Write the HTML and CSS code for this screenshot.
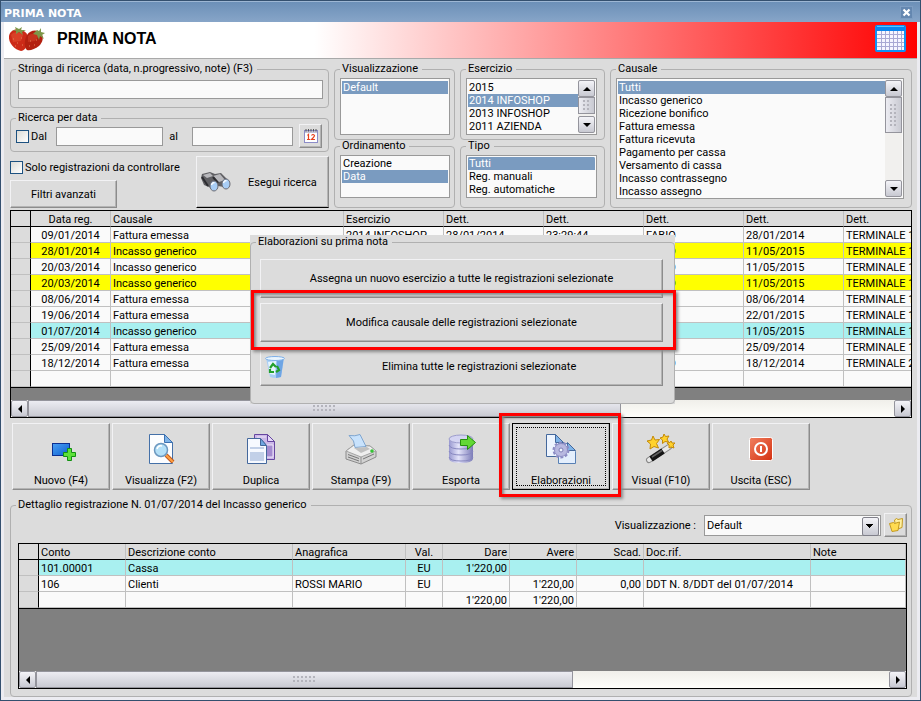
FILE: index.html
```html
<!DOCTYPE html>
<html lang="it">
<head>
    <meta charset="UTF-8">
    <meta name="viewport" content="width=device-width, initial-scale=1.0">
    <title>Prima nota</title>
    <link rel="stylesheet" href="styles.css">
</head>
<body>
    <div class="window">
        <div class="titlebar">
            <span>PRIMA NOTA</span>
            <button class="close" type="button" aria-label="Chiudi">
                <svg width="11" height="11" viewBox="0 0 11 11"><path d="M2.5 2.5l6 6M8.500 2.500l-6 6" stroke="#fff" stroke-width="2.200"/></svg>
            </button>
        </div>

        <header class="header">
            <svg width="38" height="26" viewBox="0 0 38 26">
                <path d="M1 10C2 4 8 2 14 4c5 2 7 7 6 12-1 5-4 9-7 9C7 24 0 17 1 10z" fill="#cc2a17"/>
                <path d="M3 9c3-4 8-3 12 0l-2 6-8 1z" fill="#d94026"/>
                <path d="M19 9c3-5 10-6 14-2 3 4 2 9-2 13-4 3-9 5-12 4-3-2-3-10 0-15z" fill="#b3200f"/>
                <path d="M20 10c3-3 8-3 11 0l-4 5-7 1z" fill="#c5321c"/>
                <path d="M4 5l4-1-1-3 4 2 3-2-1 3 5 0-4 2 1 3-4-3-3 2 0-3zM26 7l3-3 2 1 2-3 0 4 4 1-3 2 2 4-4-3-1 4-2-5-4-1z" fill="#7d9648"/>
                <path d="M5 13h1M9 17h1M13 12h1M7 20h1M14 19h1M22 15h1M26 19h1M28 14h1M21 20h1" stroke="#e08058"/>
            </svg>
            <h1>PRIMA NOTA</h1>
            <svg class="calendar-icon" width="32" height="28" viewBox="0 0 32 28">
                <rect x="1" y="1" width="29" height="25" rx="1" fill="#f6f6ff" stroke="#0f93f5" stroke-width="2"/>
                <path d="M1 1h29v5H1z" fill="#0a86ee"/>
                <path d="M2 1.500h27" stroke="#58c4ff"/>
                <path d="M6.500 6v19M10.500 6v19M14.500 6v19M18.500 6v19M22.500 6v19M26.500 6v19M2 9.500h27M2 13.500h27M2 17.500h27M2 21.500h27" stroke="#a9a9d4"/>
            </svg>
        </header>

        <main class="content">
            <form class="filters">
                <div class="search">
                    <fieldset class="group search-text">
                        <legend><label for="stringa">Stringa di ricerca (data, n.progressivo, note) (F3)</label></legend>
                        <input class="field" type="text" id="stringa">
                    </fieldset>
                    <fieldset class="group search-date">
                        <legend>Ricerca per data</legend>
                        <div class="date-row">
                            <label class="check"><input type="checkbox"> Dal</label>
                            <input class="field from" type="text" aria-label="Dal">
                            <label for="al">al</label>
                            <input class="field to" type="text" id="al">
                            <button class="btn square" type="button" aria-label="Calendario">
                                <svg width="16" height="16" viewBox="0 0 16 16">
                                    <rect x="1.500" y="2.500" width="13" height="12" fill="#fff" stroke="#8c8cc8"/>
                                    <path d="M2 3h12v2H2z" fill="#c4c4d8"/>
                                    <path d="M3 3.500V1M5.500 3.500V1M8 3.500V1M10.500 3.500V1M13 3.500V1" stroke="#555"/>
                                    <path d="M4.500 7.500l1-1v5M4 11.500h3M8.500 7.500q1.500-2 3 0 0 1-3 4h3.500" fill="none" stroke="#e8401c" stroke-width="1.200"/>
                                </svg>
                            </button>
                        </div>
                    </fieldset>
                    <div class="search-actions">
                        <div class="search-options">
                            <label class="check"><input type="checkbox"> Solo registrazioni da controllare</label>
                            <button class="btn advanced" type="button">Filtri avanzati</button>
                        </div>
                        <button class="btn run" type="button">
                            <svg width="32" height="22" viewBox="0 0 32 22">
                                <path d="M2 3l8-2 5 2 6-1 7 7-4 7-6-1-4-4-3 6-7-3-3-7z" fill="#606064"/>
                                <path d="M3 4l7-2 3 3-6 2zM13 5l7-2 5 6-6 2z" fill="#b8b8bc"/>
                                <path d="M2 6l6 9M13 6l5 6" stroke="#2c2c30" stroke-width="2"/>
                                <ellipse cx="14" cy="15" rx="4" ry="5" fill="#a8cdf5" stroke="#6a6a72"/>
                                <ellipse cx="26" cy="13" rx="4" ry="5" fill="#a8cdf5" stroke="#6a6a72"/>
                                <path d="M11.500 14q1-3 3-2M23.500 12q1-3 3-2" stroke="#fff" stroke-width="1.500" fill="none"/>
                            </svg>
                            <span>Esegui ricerca</span>
                        </button>
                    </div>
                </div>

                <div class="stack views">
                    <fieldset class="group">
                        <legend><label for="vista">Visualizzazione</label></legend>
                        <div class="listbox tall">
                            <select id="vista" size="4"><option selected>Default</option></select>
                        </div>
                    </fieldset>
                    <fieldset class="group">
                        <legend><label for="ordinamento">Ordinamento</label></legend>
                        <div class="listbox">
                            <select id="ordinamento" size="3"><option>Creazione</option><option selected>Data</option></select>
                        </div>
                    </fieldset>
                </div>

                <div class="stack">
                    <fieldset class="group">
                        <legend><label for="esercizio">Esercizio</label></legend>
                        <div class="listbox tall">
                            <select id="esercizio" size="4">
                                <option>2015</option>
                                <option selected>2014 INFOSHOP</option>
                                <option>2013 INFOSHOP</option>
                                <option>2011 AZIENDA</option>
                            </select>
                            <div class="vscroll">
                                <button class="sb up" type="button" aria-label="Su"></button>
                                <div class="thumb short"></div>
                                <button class="sb down" type="button" aria-label="Giù"></button>
                            </div>
                        </div>
                    </fieldset>
                    <fieldset class="group">
                        <legend><label for="tipo">Tipo</label></legend>
                        <div class="listbox">
                            <select id="tipo" size="3">
                                <option selected>Tutti</option>
                                <option>Reg. manuali</option>
                                <option>Reg. automatiche</option>
                            </select>
                        </div>
                    </fieldset>
                </div>

                <fieldset class="group">
                    <legend><label for="causale">Causale</label></legend>
                    <div class="listbox full">
                        <select id="causale" size="9">
                            <option selected>Tutti</option>
                            <option>Incasso generico</option>
                            <option>Ricezione bonifico</option>
                            <option>Fattura emessa</option>
                            <option>Fattura ricevuta</option>
                            <option>Pagamento per cassa</option>
                            <option>Versamento di cassa</option>
                            <option>Incasso contrassegno</option>
                            <option>Incasso assegno</option>
                        </select>
                        <div class="vscroll">
                            <button class="sb up" type="button" aria-label="Su"></button>
                            <div class="thumb"></div>
                            <button class="sb down" type="button" aria-label="Giù"></button>
                        </div>
                    </div>
                </fieldset>
            </form>

            <section class="records">
                <div class="datagrid">
                    <div class="viewport">
                        <table class="records-table">
                            <colgroup>
                                <col class="c20"><col class="c80"><col class="c233"><col class="c100"><col class="c100"><col class="c100"><col class="c100"><col class="c100"><col>
                            </colgroup>
                            <thead>
                                <tr><th></th><th class="center">Data reg.</th><th>Causale</th><th>Esercizio</th><th>Dett.</th><th>Dett.</th><th>Dett.</th><th>Dett.</th><th>Dett.</th></tr>
                            </thead>
                            <tbody>
                                <tr><th></th><td class="center">09/01/2014</td><td>Fattura emessa</td><td>2014 INFOSHOP</td><td>28/01/2014</td><td>23:29:44</td><td>FABIO</td><td>28/01/2014</td><td>TERMINALE 1</td></tr>
                                <tr class="warn"><th></th><td class="center">28/01/2014</td><td>Incasso generico</td><td></td><td></td><td></td><td>FABIO</td><td>11/05/2015</td><td>TERMINALE 1</td></tr>
                                <tr><th></th><td class="center">20/03/2014</td><td>Incasso generico</td><td></td><td></td><td></td><td>FABIO</td><td>11/05/2015</td><td>TERMINALE 1</td></tr>
                                <tr class="warn"><th></th><td class="center">20/03/2014</td><td>Incasso generico</td><td></td><td></td><td></td><td>FABIO</td><td>11/05/2015</td><td>TERMINALE 1</td></tr>
                                <tr><th></th><td class="center">08/06/2014</td><td>Fattura emessa</td><td></td><td></td><td></td><td>FABIO</td><td>08/06/2014</td><td>TERMINALE 1</td></tr>
                                <tr><th></th><td class="center">19/06/2014</td><td>Fattura emessa</td><td></td><td></td><td></td><td>FABIO</td><td>22/01/2015</td><td>TERMINALE 1</td></tr>
                                <tr class="current"><th></th><td class="center">01/07/2014</td><td>Incasso generico</td><td></td><td></td><td></td><td>FABIO</td><td>11/05/2015</td><td>TERMINALE 1</td></tr>
                                <tr><th></th><td class="center">25/09/2014</td><td>Fattura emessa</td><td></td><td></td><td></td><td>FABIO</td><td>25/09/2014</td><td>TERMINALE 1</td></tr>
                                <tr><th></th><td class="center">18/12/2014</td><td>Fattura emessa</td><td></td><td></td><td></td><td>FABIO</td><td>18/12/2014</td><td>TERMINALE 2</td></tr>
                                <tr><th></th><td></td><td></td><td></td><td></td><td></td><td></td><td></td><td></td></tr>
                            </tbody>
                        </table>
                    </div>
                    <div class="hscroll">
                        <button class="sb left" type="button" aria-label="Sinistra"></button>
                        <div class="track"><div class="thumb" style="width: 68.5%"></div></div>
                        <button class="sb right" type="button" aria-label="Destra"></button>
                    </div>
                </div>

                <div class="popup">
                    <fieldset class="group">
                        <legend>Elaborazioni su prima nota</legend>
                        <button class="btn" type="button">Assegna un nuovo esercizio a tutte le registrazioni selezionate</button>
                        <div class="marked">
                            <button class="btn" type="button">Modifica causale delle registrazioni selezionate</button>
                            <div class="marker"></div>
                        </div>
                        <button class="btn delete" type="button">
                            <svg width="24" height="24" viewBox="0 0 24 24">
                                <path d="M2 3l18-1-3 20q-5 2-11 0z" fill="#a9cff5"/>
                                <path d="M13 4l7-2-3 20-5 1z" fill="#6fa5e4"/>
                                <path d="M4 7l8-1-1 14-5-1z" fill="#e6f4ff"/>
                                <ellipse cx="11" cy="3.500" rx="9.500" ry="2" fill="#e9f5ff" stroke="#7eb0e8"/>
                                <path d="M6 13l3-4 3 3M13 11l2 4-3 2M10 17l-4 0 0-3" fill="none" stroke="#23a02c" stroke-width="2.200"/>
                            </svg>
                            <span>Elimina tutte le registrazioni selezionate</span>
                        </button>
                    </fieldset>
                </div>
            </section>

            <nav class="toolbar">
                <button class="btn" type="button">
                    <svg width="32" height="32" viewBox="0 0 32 32">
                        <defs><linearGradient id="blue" x2="1" y2="1"><stop stop-color="#4ba0f4"/><stop offset="1" stop-color="#0b5fd0"/></linearGradient></defs>
                        <rect x="7.500" y="10.500" width="17" height="12" fill="url(#blue)" stroke="#0b2f92"/>
                        <path d="M22.500 15.500h4v4h4v4h-4v4h-4v-4h-4v-4h4z" fill="#5ee03a" stroke="#129112"/>
                    </svg>
                    <span>Nuovo (F4)</span>
                </button>
                <button class="btn" type="button">
                    <svg width="32" height="32" viewBox="0 0 32 32">
                        <path d="M4.500 1.500h15l8 8v21h-23z" fill="#fcfdff" stroke="#4470a8"/>
                        <path d="M19.500 1.500v8h8z" fill="#7fb4e8" stroke="#3c70b0"/>
                        <path d="M21 22l7 7" stroke="#c05a20" stroke-width="4"/><path d="M21 22l7 7" stroke="#ffa040" stroke-width="2"/>
                        <circle cx="16" cy="17" r="6.500" fill="#b4e0f8" stroke="#6c98c0" stroke-width="1.500"/>
                        <path d="M12 16q1-4 5-3" stroke="#fff" stroke-width="1.500" fill="none"/>
                    </svg>
                    <span>Visualizza (F2)</span>
                </button>
                <button class="btn" type="button">
                    <svg width="32" height="32" viewBox="0 0 32 32">
                        <path d="M9.500 1.500h13l7 7v18h-20z" fill="#cbb8e8" stroke="#6646a0"/>
                        <path d="M12 4h9M20 12h8v12h-8z" fill="#a48cd0" stroke="#eee4fa"/>
                        <path d="M22.500 1.500v7h7z" fill="#e4d8f8" stroke="#6646a0"/>
                        <path d="M2.500 5.500h13l6 7v18h-19z" fill="#f6f9ff" stroke="#44689c"/>
                        <path d="M5 14h14v2H5zM5 19h14v9H5z" fill="#c2d0e8"/>
                        <path d="M15.500 5.500v7h6z" fill="#6fa6e0" stroke="#44689c"/>
                    </svg>
                    <span>Duplica</span>
                </button>
                <button class="btn" type="button">
                    <svg width="32" height="32" viewBox="0 0 32 32">
                        <path d="M1 18l8-6 16 1 6 5v6l-15 7-15-5z" fill="#d2d2d2" stroke="#8c8c8c"/>
                        <path d="M1 18l8-6 16 1 6 5-15 6z" fill="#efefef" stroke="#a4a4a4"/>
                        <path d="M4 2.500q6 1 11-1l6 12-11 1q0-7-6-12z" fill="#c8e2fc" stroke="#7fa6d0"/>
                        <path d="M16 24v7" stroke="#909090"/>
                        <path d="M3 21.500l11 4M3 24l11 4M18 26l11-5" stroke="#787878"/>
                        <path d="M9 15l13-1 3 2-9 4z" fill="#c0c0c0"/>
                        <circle cx="27" cy="18" r="1.800" fill="#35c435"/>
                    </svg>
                    <span>Stampa (F9)</span>
                </button>
                <button class="btn" type="button">
                    <svg width="32" height="32" viewBox="0 0 32 32">
                        <defs><linearGradient id="disk"><stop stop-color="#9898d0"/><stop offset=".4" stop-color="#e4e4fa"/><stop offset="1" stop-color="#7c7cb8"/></linearGradient></defs>
                        <path d="M4 6v20q1 4 12 4t12-4V6z" fill="url(#disk)"/>
                        <ellipse cx="16" cy="6" rx="12" ry="4" fill="#d4d4f2" stroke="#9c9ccc"/>
                        <path d="M4 12q1 4 12 4t12-4M4 18q1 4 12 4t12-4M4 24q1 4 12 4t12-4" fill="none" stroke="#8888c0"/>
                        <path d="M15.500 6.500h7v-4l8 7-8 7v-4h-7z" fill="#62d835" stroke="#26900e"/>
                    </svg>
                    <span>Esporta</span>
                </button>
                <div class="marked">
                    <button class="btn focused" type="button">
                        <svg width="32" height="32" viewBox="0 0 32 32">
                            <path d="M1.500 1.500h9l8 8v14h-17z" fill="#eef5ff" stroke="#44689c"/>
                            <path d="M10.500 1.500v8h8z" fill="#7fb4e8" stroke="#44689c"/>
                            <path d="M13.500 30.500v-20h9l8 8v12z" fill="#e4effd" stroke="#5880b4"/>
                            <path d="M22.500 9.500v8h8z" fill="#7fb4e8" stroke="#44689c"/>
                            <circle cx="16" cy="17" r="7.500" fill="none" stroke="#8c8cc4" stroke-width="2" stroke-dasharray="2.900 1.810"/>
                            <circle cx="16" cy="17" r="6.500" fill="#b8b8e0" stroke="#8c8cc4"/>
                            <circle cx="16" cy="17" r="2" fill="#f0f6ff" stroke="#7c7cb4"/>
                        </svg>
                        <span>Elaborazioni</span>
                    </button>
                    <div class="marker"></div>
                </div>
                <button class="btn" type="button">
                    <svg width="32" height="32" viewBox="0 0 32 32">
                        <path d="M4 27L24 14" stroke="#888" stroke-width="6" stroke-linecap="round"/>
                        <path d="M4 27L24 14" stroke="#e8e8e8" stroke-width="4" stroke-linecap="round"/>
                        <path d="M6 26L18 18" stroke="#151515" stroke-width="6"/>
                        <path d="M7 24L17 17.500" stroke="#606060" stroke-width="1.500"/>
                        <path d="M8 3l2 4 4.500-.5-3 4 2 4.500-4.500-1.500L5 16l.5-5L2 8l4.500-1zM19 1l1.500 2.500 3.500-.5-2 3 1.500 3-3.500-.5-2.500 2v-3.500L15 5l3-1zM26 8l1 2h3l-2 2 1 3-3-1-2 1v-3l-2-2 3-.5z" fill="#ffd22c" stroke="#c48a08"/>
                    </svg>
                    <span>Visual (F10)</span>
                </button>
                <button class="btn" type="button">
                    <svg width="32" height="32" viewBox="0 0 32 32">
                        <defs><linearGradient id="red" x2="1" y2="1"><stop stop-color="#f08060"/><stop offset="1" stop-color="#d43010"/></linearGradient></defs>
                        <rect x="4.500" y="4.500" width="23" height="23" rx="2" fill="url(#red)" stroke="#fff"/>
                        <circle cx="16" cy="16" r="6" fill="none" stroke="#fff" stroke-width="2"/>
                        <path d="M16 13v6" stroke="#fff" stroke-width="2"/>
                    </svg>
                    <span>Uscita (ESC)</span>
                </button>
            </nav>

            <fieldset class="group detail">
                <legend>Dettaglio registrazione N. 01/07/2014 del Incasso generico</legend>
                <div class="detail-bar">
                    <label for="vista-dettaglio">Visualizzazione :</label>
                    <div class="combo">
                        <select id="vista-dettaglio"><option>Default</option></select>
                    </div>
                    <button class="btn square" type="button" aria-label="Apri">
                        <svg width="16" height="16" viewBox="0 0 16 16">
                            <path d="M6.500 3l2-1.500 1.500 1 4.500-1-.5 9-6 2z" fill="#fff0a0" stroke="#c49a20"/>
                            <path d="M1.500 6.500l4-1 1 1L11.500 5l-1.500 8.500-6 1z" fill="#ffdc50" stroke="#c49a20"/>
                        </svg>
                    </button>
                </div>
                <div class="datagrid">
                    <div class="viewport">
                        <table>
                            <colgroup>
                                <col class="c20"><col class="c87"><col class="c167"><col class="c113"><col class="c37"><col class="c67"><col class="c67"><col class="c67"><col class="c167"><col>
                            </colgroup>
                            <thead>
                                <tr><th></th><th>Conto</th><th>Descrizione conto</th><th>Anagrafica</th><th class="center">Val.</th><th class="num">Dare</th><th class="num">Avere</th><th class="num">Scad.</th><th>Doc.rif.</th><th>Note</th></tr>
                            </thead>
                            <tbody>
                                <tr class="current"><th></th><td>101.00001</td><td>Cassa</td><td></td><td class="center">EU</td><td class="num">1'220,00</td><td></td><td></td><td></td><td></td></tr>
                                <tr><th></th><td>106</td><td>Clienti</td><td>ROSSI MARIO</td><td class="center">EU</td><td></td><td class="num">1'220,00</td><td class="num">0,00</td><td>DDT N. 8/DDT del 01/07/2014</td><td></td></tr>
                                <tr><th></th><td></td><td></td><td></td><td></td><td class="num">1'220,00</td><td class="num">1'220,00</td><td></td><td></td><td></td></tr>
                            </tbody>
                        </table>
                    </div>
                    <div class="hscroll">
                        <button class="sb left" type="button" aria-label="Sinistra"></button>
                        <div class="track"><div class="thumb" style="width: 63%"></div></div>
                        <button class="sb right" type="button" aria-label="Destra"></button>
                    </div>
                </div>
            </fieldset>
        </main>
    </div>
</body>
</html>
```

FILE: styles.css
```css
* {
    box-sizing: border-box;
}
body {
    margin: 0;
    font-family: Roboto, "Liberation Sans", sans-serif;
    font-size: 11px;
    line-height: 13px;
    color: #000;
    background: #dcdcdc;
}
input, select, button {
    margin: 0;
    font: inherit;
    color: inherit;
}
svg {
    display: block;
    flex: none;
}
.window {
    display: flex;
    flex-direction: column;
    min-height: 100vh;
    border: 1px solid #34506f;
    background: #ececf1;
}

/* title bar and header */
.titlebar {
    display: flex;
    align-items: center;
    justify-content: space-between;
    height: 21px;
    padding: 3px 7px 0 3px;
    border-top: 1px solid #9db7d4;
    background: linear-gradient(#6c90b8, #87a5c8);
    color: #fff;
    font: bold 11px "DejaVu Sans", sans-serif;
}
.close {
    padding: 0;
    border: 1px solid #7d9dc2;
    background: #6487b0;
    margin-bottom: 3px;
}
.header {
    display: flex;
    align-items: center;
    height: 37px;
    margin: 0 3px;
    padding: 0 10px 2px 4px;
    border-bottom: 1px solid #a9a9a9;
    background: linear-gradient(90deg, #fff 34%, #f00);
}
.header h1 {
    margin: 0 0 0 11px;
    font: bold 16px "Liberation Sans", sans-serif;
}
.calendar-icon {
    margin-left: auto;
}
.content {
    flex: 1;
    display: flex;
    flex-direction: column;
    margin: 0 3px 3px;
    padding: 4px 5px 0 6px;
    background: #dcdcdc;
}

/* group boxes */
.group {
    min-width: 0;
    margin: 0;
    padding: 3px 7px 4px 5px;
    border: 1px solid #b0b0b0;
    border-radius: 4px;
}
.group legend {
    padding: 0 4px 0 2px;
    line-height: 12px;
}

/* inputs and buttons */
.field {
    height: 19px;
    border: 1px solid #999;
    background: #fafafa;
}
.check {
    display: flex;
    align-items: center;
    gap: 2px;
}
.check input {
    appearance: none;
    width: 13px;
    height: 13px;
    border: 1px solid #1c5180;
    background: linear-gradient(135deg, #dcdcd7, #fff);
}
.btn {
    display: flex;
    align-items: center;
    justify-content: center;
    padding: 0;
    border: 1px solid;
    border-color: #f2f2f4 #8c8c8c #8c8c8c #f2f2f4;
    background: #dcdcdc;
    box-shadow: inset -1px -1px #b4b4b4;
}
.btn.square {
    width: 23px;
    height: 24px;
}

/* filters */
.filters {
    display: grid;
    grid-template-columns: 319px 121px 145px 1fr;
    gap: 5px;
    margin-bottom: 2px;
}
.search, .stack {
    display: flex;
    flex-direction: column;
}
.search {
    gap: 4px;
}
.stack .group:last-child {
    flex: 1;
}
.views .group {
    padding-right: 4px;
}
.search-text {
    padding: 5px 5px 8px 7px;
}
.search-text .field {
    display: block;
    width: 100%;
}
.search-text legend, .detail legend {
    margin-left: -2px;
}
.search-date {
    padding: 0 6px 3px 5px;
}
.date-row {
    display: flex;
    align-items: center;
    gap: 6px;
}
.date-row .field {
    flex: 1;
    min-width: 0;
}
.date-row .from {
    margin-left: 3px;
}
.date-row .to {
    flex: 0 0 101px;
    margin-left: 8px;
}
.search-actions {
    display: flex;
    justify-content: space-between;
}
.search-options {
    display: flex;
    flex-direction: column;
    align-items: flex-start;
    gap: 6px;
    padding-top: 5px;
}
.advanced {
    width: 107px;
    height: 28px;
}
.run {
    justify-content: flex-start;
    width: 133px;
    height: 52px;
    gap: 16px;
    padding-left: 3px;
    border-bottom: 1px solid #000;
}

/* list boxes */
.listbox {
    display: flex;
    height: 43px;
    padding: 1px;
    border: 1px solid #999;
    background: #fafafa;
}
.listbox.tall {
    height: 57px;
}
.listbox.full {
    height: 121px;
}
.listbox select {
    flex: 1;
    min-width: 0;
    padding: 0;
    border: 0;
    outline: 0;
    background: none;
    overflow: hidden;
}
.tall select, .full select {
    padding-top: 1px;
}
.listbox select::-webkit-scrollbar {
    display: none;
}
.listbox option {
    min-height: 13px;
    padding: 0 1px;
    line-height: 13px;
}
.listbox option:checked {
    background: #7a9bc0 linear-gradient(#7a9bc0, #7a9bc0);
    color: #fff;
    -webkit-text-fill-color: #fff;
}

/* scroll bars */
.sb {
    display: flex;
    align-items: center;
    justify-content: center;
    flex: none;
    width: 17px;
    height: 17px;
    padding: 0;
    border: 1px solid #94949c;
    border-radius: 2px;
    background: linear-gradient(#f4f4f8, #c8c9d2);
}
.sb::before {
    content: "";
    border: 4px solid transparent;
}
.up::before {
    border-top: 0;
    border-bottom-color: #000;
}
.down::before {
    border-bottom: 0;
    border-top-color: #000;
}
.left::before {
    border-left: 0;
    border-right-color: #000;
}
.right::before {
    border-right: 0;
    border-left-color: #000;
}
.vscroll {
    display: flex;
    flex-direction: column;
    width: 17px;
    background: #f1f0ee;
}
.vscroll .down {
    margin-top: auto;
}
.thumb {
    display: flex;
    align-items: center;
    justify-content: center;
    border: 1px solid #94949c;
    background: linear-gradient(#ececf2, #c9cad2);
}
.thumb::before {
    content: "";
    width: 23px;
    height: 7px;
    background: radial-gradient(circle at 1px 1px, #b4b4bc 1px, transparent 1px) 0 0 / 4px 4px;
}
.vscroll .thumb {
    height: 36px;
    background: linear-gradient(90deg, #ececf2, #c9cad2);
}
.vscroll .thumb::before {
    width: 7px;
    height: 23px;
}
.vscroll .thumb.short {
    height: 17px;
}
.vscroll .thumb.short::before {
    height: 11px;
}
.hscroll {
    display: flex;
    height: 17px;
    background: linear-gradient(#f0efea, #fefefa);
}
.track {
    flex: 1;
    display: flex;
}

/* data grids */
.datagrid {
    display: flex;
    flex-direction: column;
    border: 1px solid #000;
    background: #808080;
}
.viewport {
    flex: 1;
    overflow: hidden;
}
table {
    table-layout: fixed;
    width: 100%;
    border-spacing: 0;
    border-bottom: 1px solid #000;
}
.records-table {
    min-width: 933px;
}
td, th {
    height: 16px;
    padding: 2px 2px 0;
    border-right: 1px solid #c0c0c0;
    border-bottom: 1px solid #c0c0c0;
    background: #fafafa;
    font-weight: normal;
    line-height: 13px;
    text-align: left;
    white-space: nowrap;
    overflow: hidden;
}
th {
    background: #dcdcdc;
}
thead th {
    border-bottom-color: #000;
}
th:first-child {
    border-right-color: #000;
}
.center {
    text-align: center;
}
.num {
    text-align: right;
}
.warn td {
    background: #ff0;
}
.current td {
    background: #a9f0f0;
}
.c20 { width: 20px; }
.c37 { width: 37px; }
.c67 { width: 67px; }
.c80 { width: 80px; }
.c87 { width: 87px; }
.c100 { width: 100px; }
.c113 { width: 113px; }
.c167 { width: 167px; }
.c233 { width: 233px; }

/* records list with the actions popup over it */
.records {
    position: relative;
}
.records .viewport {
    padding-bottom: 12px;
}
.popup {
    position: absolute;
    z-index: 1;
    top: 25px;
    left: 240px;
    width: 425px;
    padding-top: 1px;
    background: #dcdcdc;
}
.popup .group {
    display: flex;
    flex-direction: column;
    gap: 5px;
    padding: 11px 11px 17px 9px;
}
.popup .group legend {
    margin-left: -4px;
}
.popup .btn {
    width: 100%;
    height: 39px;
}
.popup .delete {
    gap: 94px;
    justify-content: flex-start;
    padding-left: 3px;
}
.marked {
    position: relative;
}
.marker {
    position: absolute;
    z-index: 2;
    inset: -13px -13px -8px -9px;
    border: 3px solid #f00;
    box-shadow: 2px 2px 3px #888, inset 2px 2px 3px #888;
    pointer-events: none;
}

/* toolbar */
.toolbar {
    display: flex;
    gap: 2px;
    margin: 5px 0 9px 2px;
}
.toolbar .btn {
    flex-direction: column;
    justify-content: flex-start;
    gap: 9px;
    width: 98px;
    height: 67px;
    padding-top: 9px;
}
.toolbar .focused {
    border-color: #000;
    outline: 1px dotted #000;
    outline-offset: -5px;
}
.toolbar .marker {
    inset: -10px -11px -7px -13px;
}

/* record detail */
.detail {
    padding: 2px 4px 7px 7px;
}
.detail .viewport {
    min-height: 127px;
}
.detail-bar {
    display: flex;
    align-items: center;
    justify-content: flex-end;
    gap: 3px;
    margin-bottom: 6px;
}
.detail-bar label {
    margin-right: 5px;
}
.combo {
    position: relative;
    width: 177px;
}
.combo select {
    appearance: none;
    display: block;
    width: 100%;
    height: 21px;
    padding: 0 2px;
    border: 1px solid #999;
    border-radius: 0;
    background: #fafafa;
}
.combo::after {
    content: "";
    position: absolute;
    top: 2px;
    right: 2px;
    width: 15px;
    height: 17px;
    border: 1px solid #80808a;
    border-radius: 2px;
    background: linear-gradient(#000, #000) 3px 6px / 7px 1px no-repeat, linear-gradient(#000, #000) 4px 7px / 5px 1px no-repeat, linear-gradient(#000, #000) 5px 8px / 3px 1px no-repeat, linear-gradient(#000, #000) 6px 9px / 1px 1px no-repeat, linear-gradient(#f4f4f8, #c8c9d2);
    pointer-events: none;
}
```
